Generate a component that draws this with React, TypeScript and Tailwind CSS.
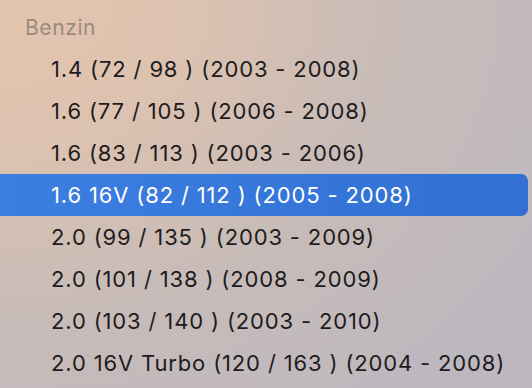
import React from "react";

const items = [
  "1.4 (72 / 98 ) (2003 - 2008)",
  "1.6 (77 / 105 ) (2006 - 2008)",
  "1.6 (83 / 113 ) (2003 - 2006)",
  "1.6 16V (82 / 112 ) (2005 - 2008)",
  "2.0 (99 / 135 ) (2003 - 2009)",
  "2.0 (101 / 138 ) (2008 - 2009)",
  "2.0 (103 / 140 ) (2003 - 2010)",
  "2.0 16V Turbo (120 / 163 ) (2004 - 2008)",
];

const selected = 3;

export default function App() {
  return (
    <div className="w-[532px] h-[388px] overflow-hidden font-['Inter',sans-serif] bg-[radial-gradient(ellipse_120%_130%_at_0%_0%,#e4c6af_0%,#dcc2b0_30%,#c9bcb8_60%,#bdb8bf_100%)]">
      <div className="h-[48px] pl-[25px] pt-[14px] text-[21px] leading-[28px] tracking-[0.6px] text-[#9b8b7f]">
        Benzin
      </div>
      <ul className="pr-[4px]">
        {items.map((label, i) => (
          <li
            key={label}
            className={
              i === selected
                ? "h-[42px] flex items-center pl-[51px] rounded-r-[7px] bg-[linear-gradient(90deg,#3b7ee2,#3270d2)] text-white text-[22px] tracking-[0.85px]"
                : "h-[42px] flex items-center pl-[51px] text-[#1e1c1c] text-[22px] tracking-[0.85px]"
            }
          >
            {label}
          </li>
        ))}
      </ul>
    </div>
  );
}
